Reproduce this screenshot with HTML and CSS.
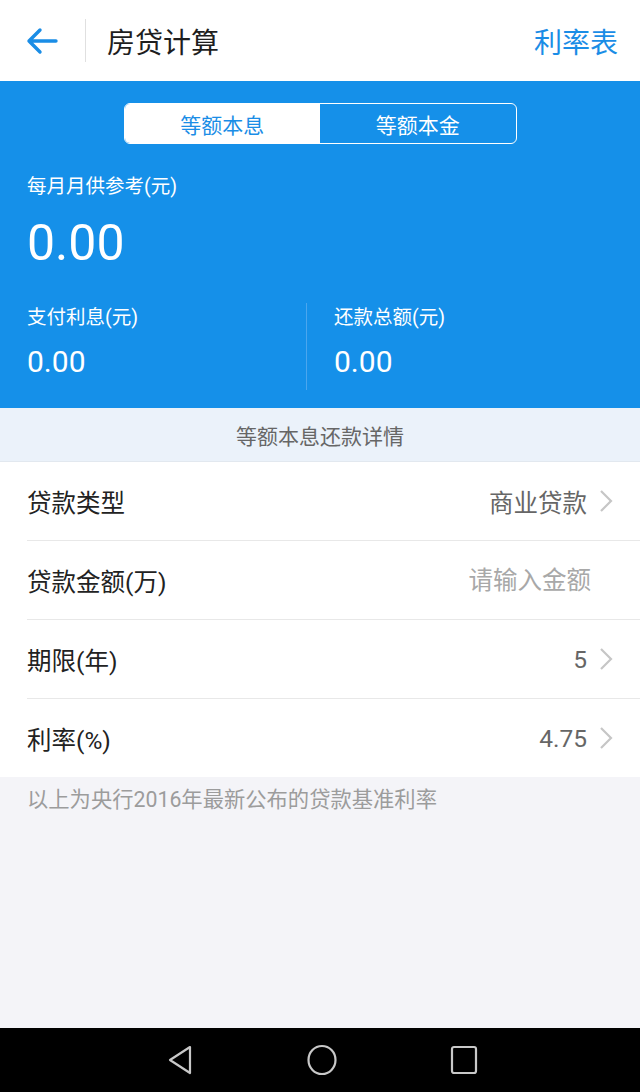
FILE: index.html
```html
<!DOCTYPE html>
<html lang="zh-CN">
<head>
    <meta charset="UTF-8">
    <meta name="viewport" content="width=device-width, initial-scale=1.0">
    <title>房贷计算</title>
    <link rel="stylesheet" href="styles.css">
</head>
<body>
<div class="app">
    <header class="topbar">
        <button class="back" type="button" aria-label="返回">
            <svg width="32" height="28" viewBox="0 0 32 28">
                <path d="M30 14H3M14 3L3 14l11 11" fill="none" stroke="#1a8de6" stroke-width="3.4" stroke-linecap="round" stroke-linejoin="round"/>
            </svg>
        </button>
        <span class="topbar-sep"></span>
        <h1 class="title">房贷计算</h1>
        <a class="rate-link" href="#">利率表</a>
    </header>

    <section class="hero">
        <div class="tabs">
            <button class="tab active" type="button">等额本息</button>
            <button class="tab" type="button">等额本金</button>
        </div>

        <p class="hero-label">每月月供参考(元)</p>
        <p class="hero-value" id="monthly">0.00</p>

        <div class="stats">
            <div class="stat">
                <p class="stat-label">支付利息(元)</p>
                <p class="stat-value" id="interest">0.00</p>
            </div>
            <div class="stat">
                <p class="stat-label">还款总额(元)</p>
                <p class="stat-value" id="total">0.00</p>
            </div>
        </div>
    </section>

    <div class="band">等额本息还款详情</div>

    <ul class="fields">
        <li class="field">
            <span class="field-name">贷款类型</span>
            <span class="field-value">商业贷款</span>
            <svg class="chevron" width="14" height="24" viewBox="0 0 14 24"><path d="M2 2l10 10L2 22" fill="none" stroke="#c6c6c6" stroke-width="2.2"/></svg>
        </li>
        <li class="field">
            <span class="field-name">贷款金额(万)</span>
            <input class="field-input" type="text" inputmode="decimal" placeholder="请输入金额">
        </li>
        <li class="field">
            <span class="field-name">期限(年)</span>
            <span class="field-value">5</span>
            <svg class="chevron" width="14" height="24" viewBox="0 0 14 24"><path d="M2 2l10 10L2 22" fill="none" stroke="#c6c6c6" stroke-width="2.2"/></svg>
        </li>
        <li class="field">
            <span class="field-name">利率(%)</span>
            <span class="field-value">4.75</span>
            <svg class="chevron" width="14" height="24" viewBox="0 0 14 24"><path d="M2 2l10 10L2 22" fill="none" stroke="#c6c6c6" stroke-width="2.2"/></svg>
        </li>
    </ul>

    <main class="note">
        <p>以上为央行2016年最新公布的贷款基准利率</p>
    </main>

    <nav class="navbar">
        <svg width="28" height="32" viewBox="0 0 28 32"><path d="M24 3L4 16l20 13z" fill="none" stroke="#c8c8c8" stroke-width="2.2" stroke-linejoin="round"/></svg>
        <svg width="32" height="32" viewBox="0 0 32 32"><ellipse cx="16" cy="16" rx="13.5" ry="14" fill="none" stroke="#c8c8c8" stroke-width="2.2"/></svg>
        <svg width="28" height="30" viewBox="0 0 28 30"><rect x="2" y="2" width="24" height="26" rx="2" fill="none" stroke="#c8c8c8" stroke-width="2.2"/></svg>
    </nav>
</div>
</body>
</html>
```

FILE: styles.css
```css
* {
    box-sizing: border-box;
}

body {
    margin: 0;
    font-family: Roboto, "Noto Sans CJK SC", sans-serif;
    background-color: #f4f4f8;
}

p {
    margin: 0;
}

.app {
    width: 640px;
    height: 1092px;
    display: flex;
    flex-direction: column;
}

.topbar {
    height: 81px;
    display: flex;
    align-items: center;
    padding: 0 22px 0 26px;
    background-color: #fff;
}

.back {
    display: flex;
    padding: 0;
    border: none;
    background: none;
}

.topbar-sep {
    width: 1px;
    height: 43px;
    margin-left: 27px;
    background-color: #e0e0e0;
}

.title {
    margin: 0 0 0 21px;
    font-size: 28px;
    font-weight: normal;
    color: #1e1e1e;
}

.rate-link {
    margin-left: auto;
    font-size: 28px;
    color: #1a8de6;
    text-decoration: none;
}

.hero {
    height: 327px;
    padding: 22px 27px 0;
    background-color: #1590e9;
    color: #fff;
}

.tabs {
    width: 393px;
    height: 41px;
    margin: 0 auto;
    display: flex;
    border: 1.5px solid #fff;
    border-radius: 6px;
    overflow: hidden;
}

.tab {
    flex: 1;
    padding: 0;
    font-family: inherit;
    font-size: 21px;
    color: #fff;
    background: none;
    border: none;
}

.tab.active {
    color: #1a8de6;
    background-color: #fff;
}

.hero-label {
    margin-top: 30px;
    font-size: 19.5px;
    line-height: 26px;
}

.hero-value {
    margin-top: 13px;
    font-size: 50px;
    line-height: 60px;
}

.stats {
    margin-top: 30px;
    display: flex;
}

.stat {
    flex: 1;
    height: 87px;
    padding-top: 2px;
}

.stat + .stat {
    border-left: 1px solid #4ba6ee;
    padding-left: 27px;
}

.stat-label {
    font-size: 19.5px;
    line-height: 26px;
}

.stat-value {
    margin-top: 11px;
    font-size: 30px;
    line-height: 40px;
}

.band {
    height: 54px;
    display: flex;
    align-items: center;
    justify-content: center;
    font-size: 21px;
    color: #666;
    background-color: #ebf2fa;
    border-bottom: 1px solid #e2e8ef;
}

.fields {
    margin: 0;
    padding: 0;
    list-style: none;
    background-color: #fff;
}

.field {
    height: 79px;
    margin-left: 27px;
    padding-right: 27px;
    display: flex;
    align-items: center;
    border-bottom: 1px solid #e8e8e8;
}

.field:last-child {
    height: 78px;
    border-bottom: none;
}

.field-name {
    font-size: 24.5px;
    color: #222;
}

.field-value {
    margin-left: auto;
    margin-right: 12px;
    font-size: 24.5px;
    color: #666;
}

.field-input {
    margin-left: auto;
    margin-right: 22px;
    width: 200px;
    padding: 0;
    font-family: inherit;
    font-size: 24.5px;
    text-align: right;
    color: #333;
    border: none;
    outline: none;
    background: none;
}

.field-input::placeholder {
    color: #a8a8a8;
}

.note {
    flex: 1;
    padding: 11px 27px 0;
    font-size: 21.3px;
    line-height: 24px;
    color: #9c9c9c;
}

.navbar {
    height: 64px;
    display: flex;
    align-items: center;
    justify-content: center;
    gap: 112px;
    padding-left: 4px;
    background-color: #000;
}
```
